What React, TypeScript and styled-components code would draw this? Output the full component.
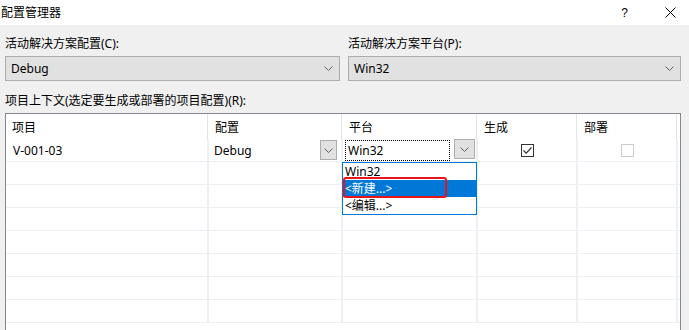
import React from "react";
import styled, { createGlobalStyle } from "styled-components";

const GRID = "#eceff3";
const COLS = "203px 134px 135px 100px 100px 1fr";

const GlobalStyle = createGlobalStyle`
  html, body {
    margin: 0;
    padding: 0;
    width: 689px;
    height: 330px;
    overflow: hidden;
    background: #f0f0f0;
  }
  body {
    font-family: "Noto Sans", "Noto Sans CJK SC", sans-serif;
    font-size: 12px;
    color: #000;
  }
`;

const Window = styled.div`
  display: flex;
  flex-direction: column;
  width: 689px;
  height: 330px;
  overflow: hidden;
  background: #f0f0f0;
`;

const TitleBar = styled.div`
  display: flex;
  align-items: center;
  height: 25px;
  background: #fff;
  padding-left: 1px;
  flex-shrink: 0;
`;

const Title = styled.span`
  flex: 1;
  font-size: 12px;
  line-height: 16px;
`;

const HelpButton = styled.span`
  font-family: "Liberation Sans", sans-serif;
  font-size: 12px;
  line-height: 16px;
  margin-right: 37px;
`;

const CloseIcon = styled.svg`
  width: 11px;
  height: 11px;
  margin-right: 13px;
`;

const Body = styled.div`
  display: flex;
  flex-direction: column;
  flex: 1;
  min-height: 0;
  padding: 11px 8px 0 5px;
`;

const Fields = styled.div`
  display: grid;
  grid-template-columns: 335px 333px;
  column-gap: 8px;
`;

const Field = styled.div`
  display: flex;
  flex-direction: column;
  gap: 4px;
`;

const Label = styled.div<{ $top?: number }>`
  font-size: 12px;
  line-height: 16px;
  margin-top: ${(p) => p.$top ?? 0}px;
`;

const Combo = styled.div`
  box-sizing: border-box;
  display: flex;
  align-items: center;
  justify-content: space-between;
  height: 25px;
  padding: 0 6px 0 5px;
  background: #e1e1e1;
  border: 1px solid #adadad;
  font-size: 12px;
`;

const Table = styled.div`
  margin-top: 4px;
  flex: 1;
  min-height: 0;
  border: 1px solid #828790;
  border-bottom: none;
  background: #fff;
  overflow: hidden;
`;

const TableInner = styled.div`
  position: relative;
`;

const HeaderRow = styled.div`
  display: grid;
  grid-template-columns: ${COLS};
  height: 25px;
`;

const HeaderCell = styled.div<{ $last?: boolean }>`
  display: flex;
  align-items: center;
  padding-left: 6px;
  border-right: ${(p) => (p.$last ? "none" : `1px solid #e3e3e3`)};
  margin-right: ${(p) => (p.$last ? 0 : 1)}px;
  font-size: 12px;
`;

const Row = styled.div`
  box-sizing: border-box;
  display: grid;
  grid-template-columns: ${COLS};
  height: 23px;
  border-bottom: 1px solid ${GRID};
`;

const Cell = styled.div<{ $last?: boolean; $center?: boolean; $pad?: number }>`
  display: flex;
  align-items: center;
  justify-content: ${(p) => (p.$center ? "center" : "flex-start")};
  padding-left: ${(p) => p.$pad ?? 7}px;
  border-right: ${(p) => (p.$last ? "none" : `2px solid ${GRID}`)};
  font-size: 12px;
  min-width: 0;
`;

const CellText = styled.span`
  flex: 1;
`;

const DropButton = styled.div<{ $w: number; $top: number; $right: number }>`
  box-sizing: border-box;
  align-self: flex-start;
  display: flex;
  align-items: center;
  justify-content: center;
  width: ${(p) => p.$w}px;
  height: 20px;
  margin-top: ${(p) => p.$top}px;
  margin-right: ${(p) => p.$right}px;
  background: #e1e1e1;
  border: 1px solid #adadad;
`;

const FocusBox = styled.div`
  box-sizing: border-box;
  align-self: flex-start;
  display: flex;
  align-items: center;
  width: 105px;
  height: 21px;
  margin-top: 1px;
  padding-left: 2px;
  border: 1px dotted #000;
  margin-right: 4px;
`;

const CheckBox = styled.div<{ $disabled?: boolean }>`
  box-sizing: border-box;
  width: 13px;
  height: 13px;
  border: 1px solid ${(p) => (p.$disabled ? "#cccccc" : "#333333")};
  background: #fff;
  display: flex;
  align-items: center;
  justify-content: center;
`;

const DropList = styled.div`
  position: absolute;
  left: 336px;
  top: 48px;
  box-sizing: border-box;
  width: 135px;
  height: 53px;
  border: 1px solid #0078d7;
  background: #fff;
  z-index: 2;
`;

const DropItem = styled.div<{ $selected?: boolean }>`
  height: 17px;
  line-height: 17px;
  padding-left: 2px;
  font-size: 12px;
  background: ${(p) => (p.$selected ? "#0078d7" : "transparent")};
  color: ${(p) => (p.$selected ? "#fff" : "#000")};
`;

const Annotation = styled.div`
  position: absolute;
  left: 0px;
  top: 14px;
  box-sizing: border-box;
  width: 104px;
  height: 21px;
  border: 2px solid #e8141b;
  border-radius: 3px;
`;

const Chevron = () => (
  <svg width="9" height="5" viewBox="0 0 9 5">
    <path d="M0.5 0.5 L4.5 4.5 L8.5 0.5" fill="none" stroke="#606060" strokeWidth="1" />
  </svg>
);

const Check = () => (
  <svg width="11" height="11" viewBox="0 0 11 11">
    <path d="M1.5 5.5 L4.2 8.2 L9.5 2.5" fill="none" stroke="#333" strokeWidth="1.2" />
  </svg>
);

const EMPTY_ROWS = 7;

export default function App() {
  return (
    <Window>
      <GlobalStyle />
      <TitleBar>
        <Title>配置管理器</Title>
        <HelpButton>?</HelpButton>
        <CloseIcon viewBox="0 0 11 11">
          <path d="M0.5 0.5 L10.5 10.5 M10.5 0.5 L0.5 10.5" stroke="#000" strokeWidth="1" fill="none" />
        </CloseIcon>
      </TitleBar>
      <Body>
        <Fields>
          <Field>
            <Label>活动解决方案配置(C):</Label>
            <Combo>
              <span>Debug</span>
              <Chevron />
            </Combo>
          </Field>
          <Field>
            <Label>活动解决方案平台(P):</Label>
            <Combo>
              <span>Win32</span>
              <Chevron />
            </Combo>
          </Field>
        </Fields>
        <Label $top={12}>项目上下文(选定要生成或部署的项目配置)(R):</Label>
        <Table>
          <TableInner>
            <HeaderRow>
              <HeaderCell>项目</HeaderCell>
              <HeaderCell>配置</HeaderCell>
              <HeaderCell>平台</HeaderCell>
              <HeaderCell>生成</HeaderCell>
              <HeaderCell>部署</HeaderCell>
              <HeaderCell $last />
            </HeaderRow>
            <Row>
              <Cell>V-001-03</Cell>
              <Cell $pad={5}>
                <CellText>Debug</CellText>
                <DropButton $w={17} $top={1} $right={4}>
                  <Chevron />
                </DropButton>
              </Cell>
              <Cell $pad={2}>
                <FocusBox>Win32</FocusBox>
                <DropButton $w={21} $top={0} $right={1}>
                  <Chevron />
                </DropButton>
              </Cell>
              <Cell $center $pad={0}>
                <CheckBox>
                  <Check />
                </CheckBox>
              </Cell>
              <Cell $center $pad={0}>
                <CheckBox $disabled />
              </Cell>
              <Cell $last />
            </Row>
            {Array.from({ length: EMPTY_ROWS }).map((_, i) => (
              <Row key={i}>
                <Cell />
                <Cell />
                <Cell />
                <Cell />
                <Cell />
                <Cell $last />
              </Row>
            ))}
            <DropList>
              <DropItem>Win32</DropItem>
              <DropItem $selected>&lt;新建...&gt;</DropItem>
              <DropItem>&lt;编辑...&gt;</DropItem>
              <Annotation />
            </DropList>
          </TableInner>
        </Table>
      </Body>
    </Window>
  );
}
